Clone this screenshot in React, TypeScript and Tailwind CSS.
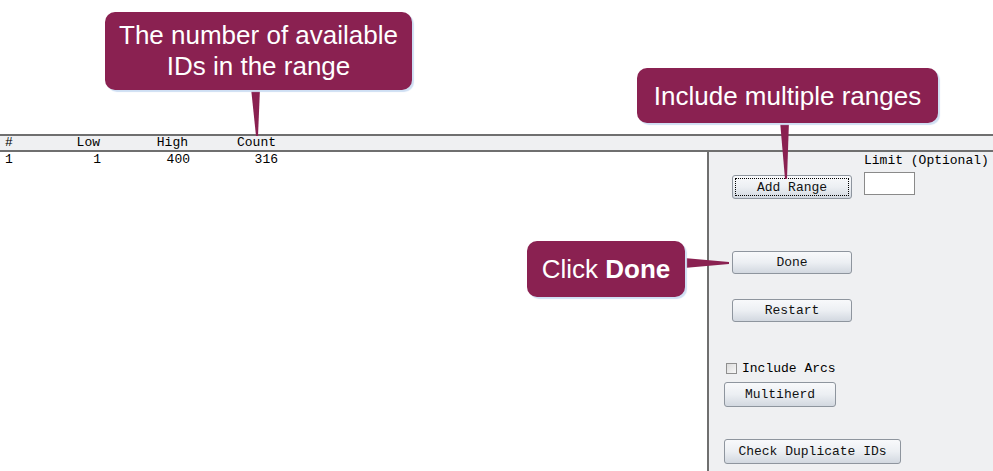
import React from "react";

const mono = { fontFamily: '"Liberation Mono", "Courier New", monospace' };
const sans = { fontFamily: '"Liberation Sans", Arial, sans-serif' };

function Btn({
  label,
  className,
  focused,
}: {
  label: string;
  className: string;
  focused?: boolean;
}) {
  return (
    <div
      className={
        "flex items-center justify-center rounded-[3px] border border-[#8e959e] bg-gradient-to-b from-[#f8f9fb] via-[#eceff3] to-[#d2d8e0] text-[13px] leading-none text-[#111] " +
        (focused ? "outline-1 outline-dotted outline-black outline-offset-[-4px] " : "") +
        className
      }
      style={mono}
    >
      {label}
    </div>
  );
}

export default function App() {
  return (
    <div className="relative flex h-[471px] w-[993px] flex-col overflow-hidden bg-white">
      {/* top white area */}
      <div className="h-[134px] shrink-0" />

      {/* header bar */}
      <div
        className="flex h-[18px] shrink-0 items-center border-y-2 border-[#6f6f6f] bg-[#eff0f2] pl-[5px] text-[13px] leading-[14px] text-black"
        style={mono}
      >
        <span className="w-[60px]">#</span>
        <span className="w-[35px] text-right">Low</span>
        <span className="w-[88px] text-right">High</span>
        <span className="w-[88px] text-right">Count</span>
      </div>

      {/* body */}
      <div className="flex min-h-0 flex-1">
        <div className="flex-1 bg-white">
          <div
            className="flex pl-[5px] text-[13px] leading-[16px] text-black"
            style={mono}
          >
            <span className="w-[60px]">1</span>
            <span className="w-[36px] text-right">1</span>
            <span className="w-[89px] text-right">400</span>
            <span className="w-[88px] text-right">316</span>
          </div>
        </div>

        <div className="flex w-[286px] shrink-0 flex-col border-l-2 border-[#6f6f6f] bg-[#eff0f2]">
          <div className="flex items-start pl-[23px]">
            <Btn label="Add Range" focused className="mt-[23px] h-[24px] w-[120px]" />
            <div className="ml-[12px] flex flex-col">
              <span className="mt-[1px] whitespace-nowrap text-[13px] leading-[16px] text-black" style={mono}>
                Limit (Optional)
              </span>
              <div className="mt-[3px] h-[23px] w-[51px] border border-[#8a8a8a] bg-white" />
            </div>
          </div>

          <Btn label="Done" className="ml-[23px] mt-[52px] h-[23px] w-[120px]" />
          <Btn label="Restart" className="ml-[23px] mt-[25px] h-[23px] w-[120px]" />

          <div className="ml-[17px] mt-[40px] flex h-[12px] items-center gap-[5px]">
            <div className="h-[11px] w-[11px] border border-[#8f8f8f] bg-gradient-to-br from-[#dcdcdc] to-[#f7f7f7]" />
            <span className="text-[13px] leading-none text-black" style={mono}>
              Include Arcs
            </span>
          </div>

          <Btn label="Multiherd" className="ml-[15px] mt-[8px] h-[25px] w-[112px]" />
          <Btn label="Check Duplicate IDs" className="ml-[15px] mt-[32px] h-[25px] w-[177px]" />
        </div>
      </div>

      {/* callout pointers */}
      <svg
        className="pointer-events-none absolute left-0 top-0"
        width="993"
        height="471"
        viewBox="0 0 993 471"
      >
        <polygon points="251,88 260,88 258,136 256,136" fill="#8a2151" />
        <polygon points="780,121 789,121 787,179 785,179" fill="#8a2151" />
        <polygon points="684,258 684,268 729,264 729,262" fill="#8a2151" />
      </svg>

      {/* callouts */}
      <div
        className="absolute left-[105px] top-[12px] flex h-[78px] w-[307px] flex-col items-center justify-center rounded-[10px] bg-[#8a2151] text-center text-[26px] leading-[31px] text-white shadow-[2px_2px_1px_#cfdff3]"
        style={sans}
      >
        <span>The number of available</span>
        <span>IDs in the range</span>
      </div>

      <div
        className="absolute left-[637px] top-[68px] flex h-[55px] w-[301px] items-center justify-center rounded-[10px] bg-[#8a2151] text-[26px] leading-none text-white shadow-[2px_2px_1px_#cfdff3]"
        style={sans}
      >
        Include multiple ranges
      </div>

      <div
        className="absolute left-[527px] top-[241px] flex h-[56px] w-[158px] items-center justify-center rounded-[10px] bg-[#8a2151] text-[26px] leading-none text-white shadow-[2px_2px_1px_#cfdff3]"
        style={sans}
      >
        <span>
          Click <b className="font-bold">Done</b>
        </span>
      </div>
    </div>
  );
}
